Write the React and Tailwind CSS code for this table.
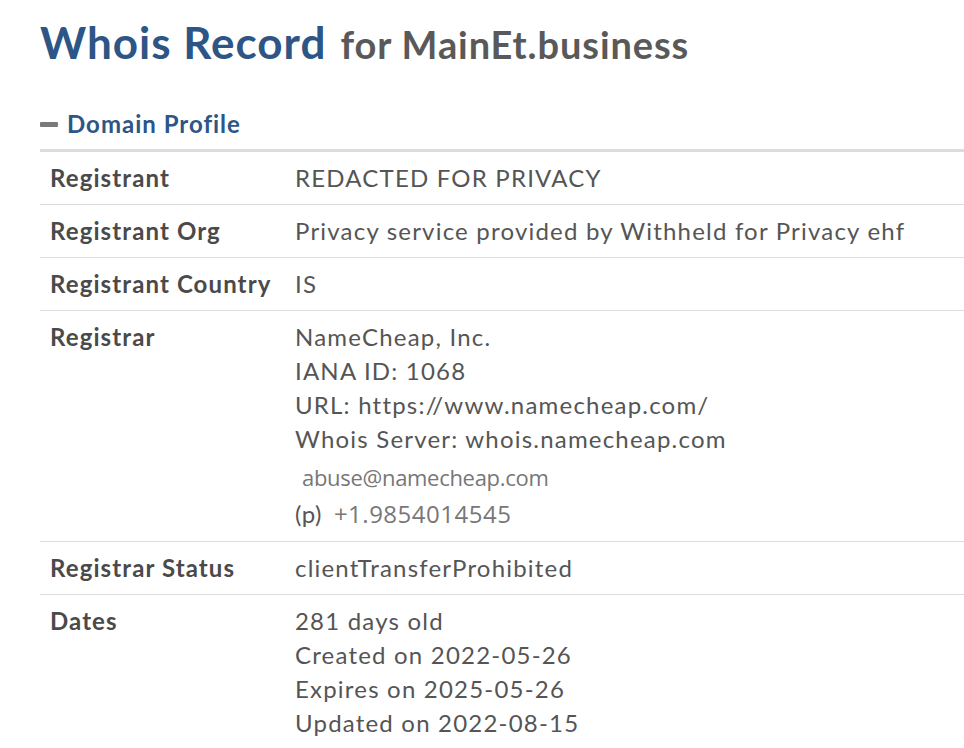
import React from "react";

const rows = [
  { label: "Registrant", lines: ["REDACTED FOR PRIVACY"] },
  { label: "Registrant Org", lines: ["Privacy service provided by Withheld for Privacy ehf"] },
  { label: "Registrant Country", lines: ["IS"] },
  {
    label: "Registrar",
    lines: [
      "NameCheap, Inc.",
      "IANA ID: 1068",
      "URL: https://www.namecheap.com/",
      "Whois Server: whois.namecheap.com",
    ],
    contact: true,
  },
  { label: "Registrar Status", lines: ["clientTransferProhibited"] },
  {
    label: "Dates",
    lines: ["281 days old", "Created on 2022-05-26", "Expires on 2025-05-26", "Updated on 2022-08-15"],
  },
];

const Row = ({ row }) => (
  <div className="flex border-b border-[#dcdcdc] py-[9px]">
    <div className="w-[255px] shrink-0 pl-[10px] font-bold text-[#4a4a4a] tracking-[1.1px]">{row.label}</div>
    <div className="flex flex-col text-[#555] tracking-[1.2px]">
      {row.lines.map((l) => (
        <div key={l}>{l}</div>
      ))}
      {row.contact && (
        <>
          <div className="flex h-[39px] items-center pl-[7px] pt-[2px] text-[22px] text-[#777] [font-family:'Open_Sans',sans-serif] tracking-[-0.3px]">
            abuse@namecheap.com
          </div>
          <div className="flex h-[37px] items-center">
            <span className="tracking-[0.5px]">(p)</span>
            <span className="ml-[12px] text-[24px] text-[#777] [font-family:'Open_Sans',sans-serif] tracking-[0.5px]">
              +1.9854014545
            </span>
          </div>
        </>
      )}
    </div>
  </div>
);

export default function App() {
  return (
    <div className="min-h-screen bg-white pl-[40px] pt-[20px] [font-family:Lato,sans-serif]">
      <h1 className="flex items-baseline font-bold leading-none">
        <span className="text-[44px] text-[#2d5586] tracking-[1px]">Whois Record</span>
        <span className="ml-[14px] text-[38px] text-[#595959] tracking-[0.9px]">for MainEt.business</span>
      </h1>
      <div className="mt-[42px] flex items-center">
        <span className="mr-[9px] h-[5px] w-[18px] rounded-[1px] bg-[#7a7a7a]" />
        <span className="text-[24px] font-bold text-[#2d5586] tracking-[1px]">Domain Profile</span>
      </div>
      <div className="mt-[7px] border-t-[3px] border-[#dcdcdc] text-[24px] leading-[34px]">
        {rows.map((r) => (
          <Row key={r.label} row={r} />
        ))}
      </div>
    </div>
  );
}
